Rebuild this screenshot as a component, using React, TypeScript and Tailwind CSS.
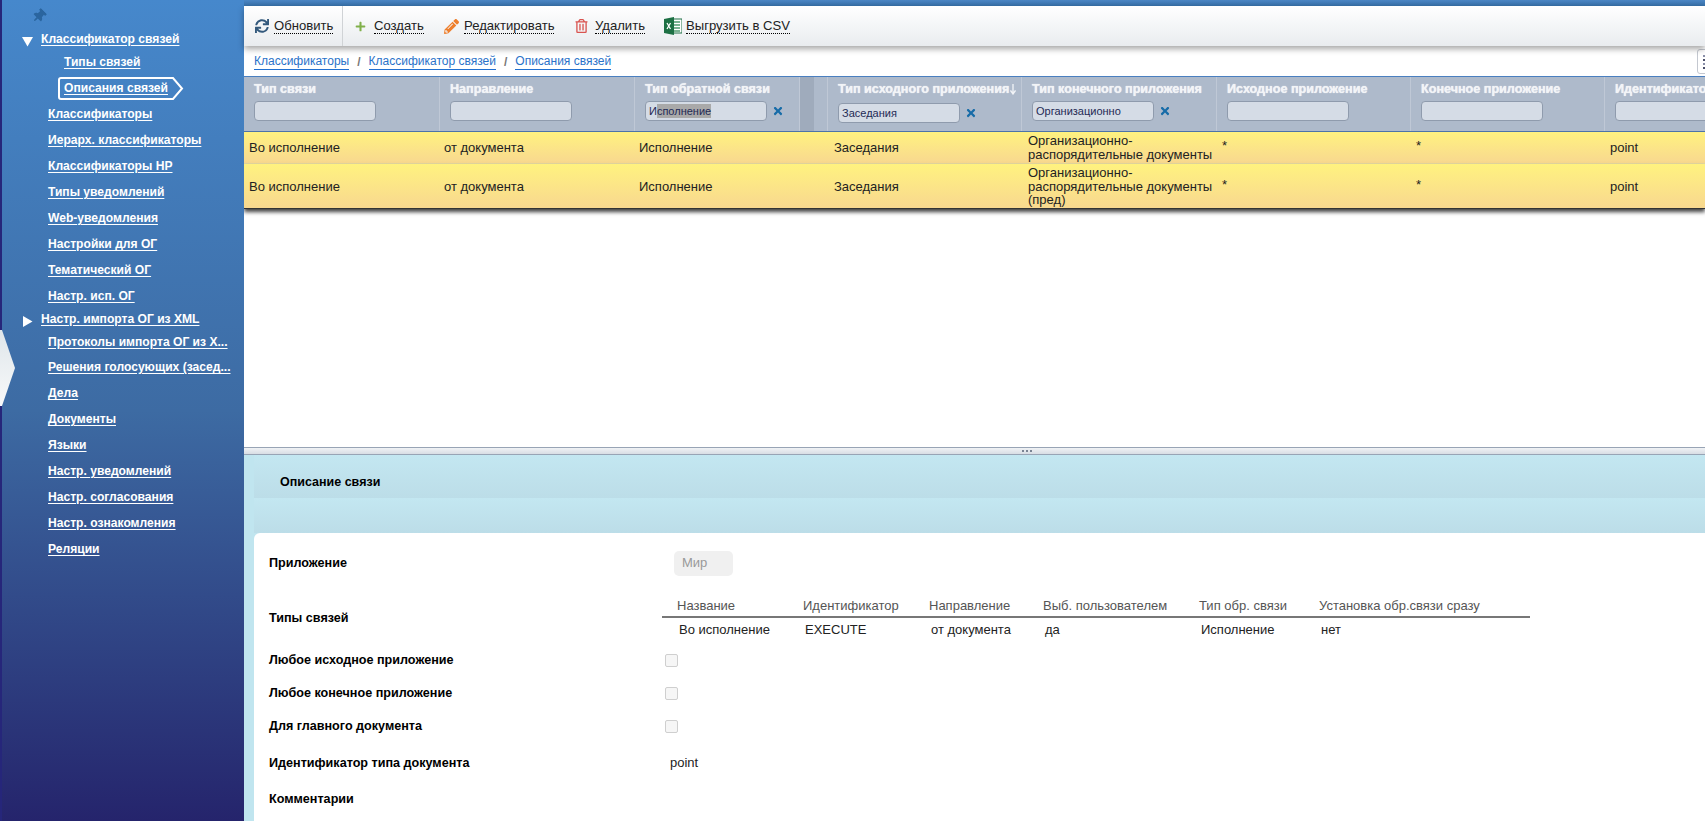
import { FaSync, FaPlus, FaPencilAlt, FaRegTrashAlt, FaTimes, FaThumbtack } from "react-icons/fa"

const font = "font-['Liberation_Sans',Arial,sans-serif]"

const navItems: { label: string; level: "group" | "sub" | "item"; open?: boolean; active?: boolean; mt?: string }[] = [
    { label: "Классификатор связей", level: "group", open: true },
    { label: "Типы связей", level: "sub", mt: "-mt-[3px]" },
    { label: "Описания связей", level: "sub", active: true },
    { label: "Классификаторы", level: "item" },
    { label: "Иерарх. классификаторы", level: "item" },
    { label: "Классификаторы НР", level: "item" },
    { label: "Типы уведомлений", level: "item" },
    { label: "Web-уведомления", level: "item" },
    { label: "Настройки для ОГ", level: "item" },
    { label: "Тематический ОГ", level: "item" },
    { label: "Настр. исп. ОГ", level: "item" },
    { label: "Настр. импорта ОГ из XML", level: "group", open: false, mt: "-mt-[3px]" },
    { label: "Протоколы импорта ОГ из Х...", level: "item", mt: "-mt-[3px]" },
    { label: "Решения голосующих (засед...", level: "item", mt: "-mt-[1px]" },
    { label: "Дела", level: "item" },
    { label: "Документы", level: "item" },
    { label: "Языки", level: "item" },
    { label: "Настр. уведомлений", level: "item" },
    { label: "Настр. согласования", level: "item" },
    { label: "Настр. ознакомления", level: "item" },
    { label: "Реляции", level: "item" },
]

function Sidebar() {
    return (
        <aside className="relative w-[244px] shrink-0 h-full border-l-2 border-[#26267a] bg-gradient-to-b from-[#4688cc] via-[#3d6ba3] via-50% to-[#25246c] text-white">
            <div className="h-[26px] pl-[30px] pt-[9px]">
                <FaThumbtack className="w-[14px] h-[14px] rotate-45 text-[#2a659f]" />
            </div>
            {navItems.map((n) => (
                <div key={n.label} className={`relative h-[26px] flex items-center text-[12.100px] font-bold leading-none ${n.mt ?? ""}`}>
                    {n.level === "group" && (
                        <>
                            <svg width="11" height="11" viewBox="0 0 11 11" className="absolute left-[20px] top-[10px]">
                                {n.open ? <path d="M0 1h11L5.500 10.500z" fill="#fff" /> : <path d="M1 0l9.500 5.500L1 11z" fill="#fff" />}
                            </svg>
                            <span className="ml-[39px] underline underline-offset-2">{n.label}</span>
                        </>
                    )}
                    {n.level === "sub" && (
                        <>
                            {n.active && (
                                <svg width="126" height="23" viewBox="0 0 126 23" className="absolute left-[56px] top-[2px]">
                                    <path d="M3 1h112l9 10.500-9 10.500H3a2 2 0 0 1-2-2V3a2 2 0 0 1 2-2z" fill="none" stroke="#fff" strokeWidth="2" />
                                </svg>
                            )}
                            <span className="ml-[62px] underline underline-offset-2">{n.label}</span>
                        </>
                    )}
                    {n.level === "item" && <span className="ml-[46px] underline underline-offset-2">{n.label}</span>}
                </div>
            ))}
            <svg width="17" height="76" viewBox="0 0 17 76" className="absolute -left-[2px] top-[330px]">
                <defs>
                    <linearGradient id="tab" x1="0" y1="0" x2="0" y2="1">
                        <stop offset="0" stopColor="#dfe6ea" />
                        <stop offset="1" stopColor="#f8f9fa" />
                    </linearGradient>
                </defs>
                <path d="M0 0h2l13 38L2 76H0z" fill="url(#tab)" />
            </svg>
        </aside>
    )
}

function ExcelIcon() {
    return (
        <svg width="18" height="18" viewBox="0 0 18 18">
            <rect x="7" y="2" width="11" height="14" fill="#fff" stroke="#1d7044" />
            <path d="M10 5h6M10 8h6M10 11h6M10 14h6" stroke="#4f9a6f" strokeWidth="1.500" />
            <path d="M0 2l10-2v18L0 16z" fill="#1d7044" />
            <path d="M3 6l3.500 6M6.500 6L3 12" stroke="#fff" strokeWidth="1.300" />
        </svg>
    )
}

function ToolButton({ icon, label, gap, width }: { icon: React.ReactNode; label: string; gap: string; width: string }) {
    return (
        <div className={`flex items-center shrink-0 ${gap} ${width}`}>
            {icon}
            <span className="text-[13.100px] leading-[15px] text-[#222] border-b border-dotted border-black">{label}</span>
        </div>
    )
}

function Toolbar() {
    return (
        <div className="relative z-10 h-[40px] flex items-center bg-gradient-to-b from-white to-[#e9ecef] shadow-[0_3px_6px_rgba(0,0,0,0.35)]">
            <div className="h-full w-[99px] pl-[11px] flex items-center border-r border-[#d0d3d6]">
                <ToolButton icon={<FaSync className="w-[14px] h-[14px] text-[#33597c]" />} label="Обновить" gap="gap-[5px]" width="" />
            </div>
            <div className="flex items-center pl-[12px]">
                <ToolButton icon={<FaPlus className="w-[11px] h-[11px] text-[#80b04a]" />} label="Создать" gap="gap-[8px]" width="w-[89px]" />
                <ToolButton icon={<FaPencilAlt className="w-[15px] h-[15px] text-[#ee7f2d]" />} label="Редактировать" gap="gap-[5px]" width="w-[131px]" />
                <ToolButton icon={<FaRegTrashAlt className="w-[13px] h-[14px] text-[#d9534f]" />} label="Удалить" gap="gap-[7px]" width="w-[89px]" />
                <ToolButton icon={<ExcelIcon />} label="Выгрузить в CSV" gap="gap-[4px]" width="" />
            </div>
        </div>
    )
}

function Crumb({ label }: { label: string }) {
    return <span className="text-[12px] leading-[15px] text-[#2a72c9] border-b border-[#1f6fd0]">{label}</span>
}

function Breadcrumbs() {
    return (
        <div className="h-[30px] flex items-center pl-[10px] pt-[1px] bg-white">
            <Crumb label="Классификаторы" />
            <span className="mx-[8px] text-[12px] font-bold text-[#777]">/</span>
            <Crumb label="Классификатор связей" />
            <span className="mx-[8px] text-[12px] font-bold text-[#777]">/</span>
            <Crumb label="Описания связей" />
            <div className="ml-auto -mr-[24px] w-[32px] h-[25px] border border-[#c4c8d0] rounded-[3px] flex flex-col justify-center gap-[2px] pl-[5px]">
                <span className="w-[6px] h-[2px] bg-[#8a8fa8]" />
                <span className="w-[6px] h-[2px] bg-[#4a4f6a]" />
                <span className="w-[6px] h-[2px] bg-[#8a8fa8]" />
                <span className="w-[6px] h-[2px] bg-[#4a4f6a]" />
            </div>
        </div>
    )
}

const gridCols = "grid grid-cols-[196px_195px_165px_14px_14px_194px_195px_194px_194px_200px]"

function Filter({ title, value, selected, lower, sorted }: { title: string; value?: string; selected?: string; lower?: boolean; sorted?: boolean }) {
    return (
        <div className="h-full pl-[10px] pt-[5px] border-r border-[#bfc8d6] overflow-hidden whitespace-nowrap">
            <div className="flex items-center text-[12.600px] font-bold leading-[15px] text-[#f2f4f7] [text-shadow:0_0_1px_#ffffff]">
                {title}
                {sorted && (
                    <svg width="6" height="11" viewBox="0 0 6 11" className="ml-[1px] shrink-0">
                        <path d="M3 0v9M.5 6.500L3 10l2.500-3.500" fill="none" stroke="#f2f4f7" strokeWidth="1.300" />
                    </svg>
                )}
            </div>
            <div className={`flex items-center ${lower ? "mt-[6px]" : "mt-[4px]"}`}>
                <div className="w-[122px] h-[20px] shrink-0 bg-[#d5dce6] border border-[#8f9bad] rounded-[4px] pl-[3px] flex items-center text-[11px] leading-[14px] text-[#1f2a55]">
                    {value}
                    {selected && <span className="bg-[#a9a9a9]">{selected}</span>}
                </div>
                {(value || selected) && <FaTimes className="ml-[5px] w-[12px] h-[12px] text-[#176ca8]" />}
            </div>
        </div>
    )
}

function TableHead() {
    return (
        <div className={`${gridCols} h-[56px] bg-[#aebacb] border-t border-b border-[#4a7fc0] border-b-[#4d74a8]`}>
            <Filter title="Тип связи" />
            <Filter title="Направление" />
            <Filter title="Тип обратной связи" value="И" selected="сполнение" />
            <div className="bg-[#9fabbc]" />
            <div className="border-r border-[#bfc8d6]" />
            <Filter title="Тип исходного приложения" value="Заседания" lower sorted />
            <Filter title="Тип конечного приложения" value="Организационно" />
            <Filter title="Исходное приложение" />
            <Filter title="Конечное приложение" />
            <Filter title="Идентификатор типа документа" />
        </div>
    )
}

function Row({ last, target, h }: { last?: boolean; target: string; h: string }) {
    return (
        <div className={`${gridCols} ${h} items-center bg-gradient-to-b from-[#fff27f] to-[#f8d88f] text-[13px] leading-[13.500px] text-[#222] ${last ? "pt-[1px] border-b border-[#333]" : "border-b border-[#e6d9a0]"}`}>
            <div className="pl-[5px]">Во исполнение</div>
            <div className="pl-[4px]">от документа</div>
            <div className="pl-[4px] col-span-3">Исполнение</div>
            <div className="pl-[6px]">Заседания</div>
            <div className="pl-[6px]">{target}</div>
            <div className="pl-[5px] -translate-y-[2px]">*</div>
            <div className="pl-[5px] -translate-y-[2px]">*</div>
            <div className="pl-[5px]">point</div>
        </div>
    )
}

function LinkTable() {
    const cols = ["w-[126px]", "w-[126px]", "w-[114px]", "w-[156px]", "w-[120px]", "w-auto"]
    const head = ["Название", "Идентификатор", "Направление", "Выб. пользователем", "Тип обр. связи", "Установка обр.связи сразу"]
    const body = ["Во исполнение", "EXECUTE", "от документа", "да", "Исполнение", "нет"]
    return (
        <div className="w-[868px] -ml-[7px] text-[13px] leading-[15px]">
            <div className="flex pl-[15px] h-[23px] items-center text-[#555] border-b-2 border-[#777]">
                {head.map((t, i) => (
                    <div key={t} className={`${cols[i]} shrink-0`}>{t}</div>
                ))}
            </div>
            <div className="flex pl-[17px] pt-[1px] h-[21px] items-center text-[#222]">
                {body.map((t, i) => (
                    <div key={t} className={`${cols[i]} shrink-0`}>{t}</div>
                ))}
            </div>
        </div>
    )
}

function FormRow({ label, h, children }: { label: string; h: string; children?: React.ReactNode }) {
    return (
        <div className={`flex items-center ${h}`}>
            <div className="w-[415px] shrink-0 pl-[15px] text-[12.600px] font-bold text-black">{label}</div>
            <div className="flex items-center">{children}</div>
        </div>
    )
}

function Check() {
    return <div className="w-[13px] h-[13px] ml-[-4px] border border-[#cfcfcf] rounded-[2px] bg-[#f6f6f6]" />
}

function Details() {
    return (
        <div className="flex-1 min-h-0 bg-[#c0e5ef] pl-[10px]">
            <div className="h-[43px] flex items-center pl-[26px] pt-[11px] text-[12.500px] font-bold text-black bg-gradient-to-b from-[#c3e7f1] to-[#bcdde8]">Описание связи</div>
            <div className="h-[35px] bg-gradient-to-b from-[#c3e7f1] to-[#bcdde8]" />
            <div className="h-[288px] bg-white rounded-tl-[6px] pt-[17px]">
                <FormRow label="Приложение" h="h-[26px]">
                    <div className="w-[59px] h-[25px] ml-[5px] pl-[8px] flex items-center bg-[#f0f0f0] rounded-[5px] text-[13px] text-[#999]">Мир</div>
                </FormRow>
                <div className="h-[19px]" />
                <div className="flex items-start h-[44px]">
                    <div className="w-[415px] shrink-0 pl-[15px] pt-[14px] text-[12.600px] font-bold text-black">Типы связей</div>
                    <LinkTable />
                </div>
                <div className="h-[5px]" />
                <FormRow label="Любое исходное приложение" h="h-[33px]"><Check /></FormRow>
                <FormRow label="Любое конечное приложение" h="h-[33px]"><Check /></FormRow>
                <FormRow label="Для главного документа" h="h-[33px]"><Check /></FormRow>
                <div className="h-[2px]" />
                <FormRow label="Идентификатор типа документа" h="h-[36px]">
                    <span className="text-[13px] text-[#222] ml-[1px]">point</span>
                </FormRow>
                <FormRow label="Комментарии" h="h-[36px]" />
            </div>
        </div>
    )
}

export default function App() {
    return (
        <div className={`${font} w-[1705px] h-[821px] overflow-hidden flex bg-white`}>
            <Sidebar />
            <main className="flex-1 min-w-0 h-full flex flex-col">
                <div className="h-[6px] shrink-0 bg-gradient-to-b from-[#4b86c4] to-[#366fa8]" />
                <Toolbar />
                <Breadcrumbs />
                <TableHead />
                <Row target={"Организационно-\nраспорядительные документы"} h="h-[32px] whitespace-pre-line" />
                <div className="shadow-[0_3px_4px_rgba(0,0,0,0.75)]">
                    <Row last target={"Организационно-\nраспорядительные документы\n(пред)"} h="h-[45px] whitespace-pre-line" />
                </div>
                <div className="h-[238px] shrink-0" />
                <div className="h-[8px] shrink-0 border-y border-[#98a4b5] bg-gradient-to-b from-[#f0f2f5] to-[#d8dde4] flex items-center pl-[778px] gap-[2px]">
                    <span className="w-[2px] h-[2px] bg-[#7a8494]" />
                    <span className="w-[2px] h-[2px] bg-[#7a8494]" />
                    <span className="w-[2px] h-[2px] bg-[#7a8494]" />
                </div>
                <Details />
            </main>
        </div>
    )
}
